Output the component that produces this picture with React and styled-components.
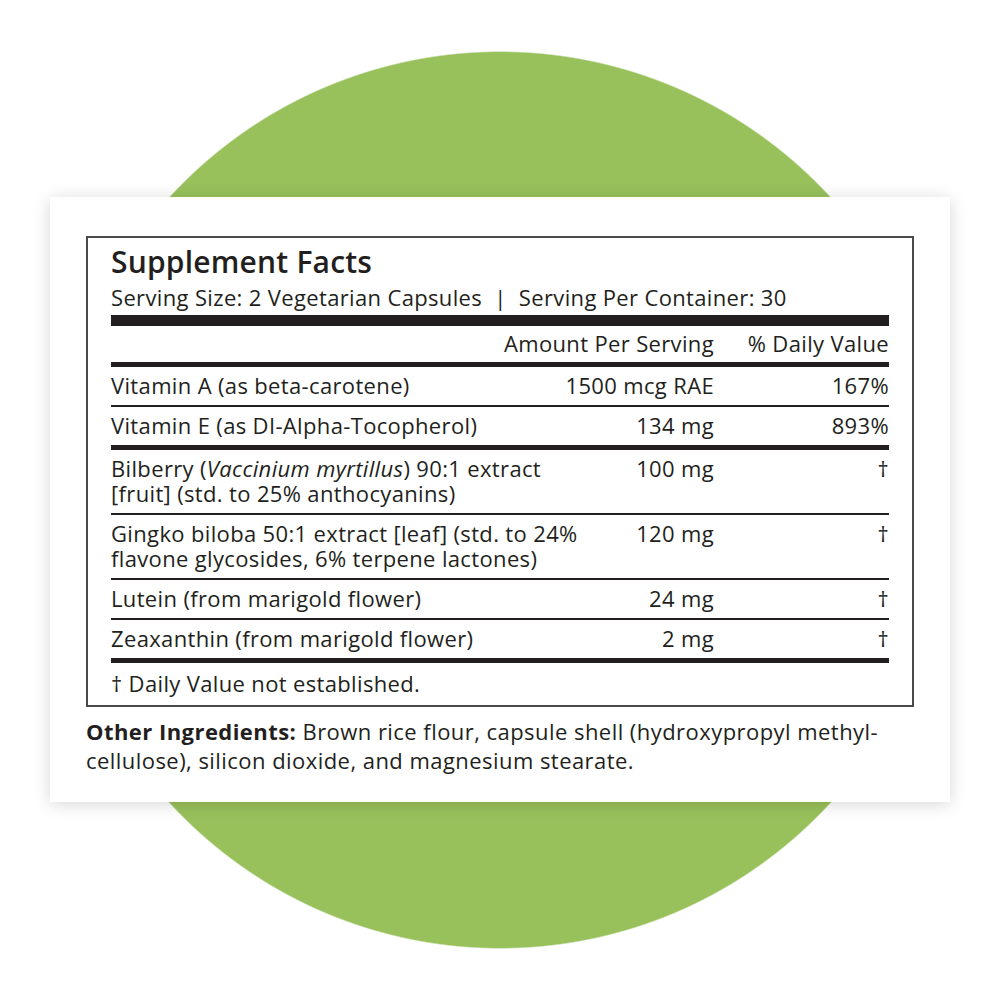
import React from "react";
import styled, { createGlobalStyle } from "styled-components";

const Global = createGlobalStyle`
  html, body { margin: 0; padding: 0; background: #ffffff; }
  body {
    font-family: "Open Sans", "Noto Sans", sans-serif;
    color: #231f20;
    -webkit-font-smoothing: antialiased;
  }
`;

const Stage = styled.div`
  width: 1000px;
  height: 1000px;
  box-sizing: border-box;
  padding: 197px 50px 0;
  background: radial-gradient(circle 449px at 500px 500px, #98c15c 447.5px, rgba(255, 255, 255, 0) 449px);
`;

const Card = styled.div`
  width: 900px;
  height: 605px;
  box-sizing: border-box;
  background: #ffffff;
  padding: 39px 36px 0;
  box-shadow: 0 2px 16px rgba(0, 0, 0, 0.16);
`;

const FactsBox = styled.div`
  border: 2px solid #4a4a4a;
  padding: 0 23px;
`;

const Title = styled.h1`
  margin: 0;
  padding-top: 6px;
  font-size: 30px;
  line-height: 36px;
  font-weight: 600;
  letter-spacing: 0.2px;
`;

const Serving = styled.div`
  margin-top: 5px;
  font-size: 22px;
  line-height: 25px;
  letter-spacing: 0.35px;
`;

const Bar = styled.div`
  height: ${(p) => p.$h}px;
  margin-top: ${(p) => p.$mt || 0}px;
  background: #231f20;
`;

const Row = styled.div`
  display: grid;
  grid-template-columns: minmax(0, 1fr) auto 175px;
  font-size: 22px;
  line-height: 25px;
  letter-spacing: 0.35px;
  padding: ${(p) => (p.$header ? "5px 0 6px" : "6px 0 7px")};
  border-bottom: ${(p) => (p.$rule === "thick" ? 5 : 2)}px solid #231f20;
`;

const Name = styled.div`
  white-space: nowrap;
`;

const Amount = styled.div`
  text-align: right;
  white-space: nowrap;
`;

const Daily = styled.div`
  text-align: right;
  white-space: nowrap;
`;

const Footnote = styled.div`
  font-size: 22px;
  line-height: 25px;
  letter-spacing: 0.35px;
  padding: 8px 0 9px;
`;

const Other = styled.p`
  margin: 10px 0 0;
  font-size: 22px;
  line-height: 29px;
  letter-spacing: 0.45px;
`;

const Label = styled.strong`
  font-weight: 700;
`;

const rows = [
  { name: "Vitamin A (as beta-carotene)", amt: "1500 mcg RAE", dv: "167%", rule: "thin" },
  { name: "Vitamin E (as DI-Alpha-Tocopherol)", amt: "134 mg", dv: "893%", rule: "thick" },
  {
    name: (
      <>
        Bilberry (<i>Vaccinium myrtillus</i>) 90:1 extract
        <br />
        [fruit] (std. to 25% anthocyanins)
      </>
    ),
    amt: "100 mg",
    dv: "†",
    rule: "thin",
  },
  {
    name: (
      <>
        Gingko biloba 50:1 extract [leaf] (std. to 24%
        <br />
        flavone glycosides, 6% terpene lactones)
      </>
    ),
    amt: "120 mg",
    dv: "†",
    rule: "thin",
  },
  { name: "Lutein (from marigold flower)", amt: "24 mg", dv: "†", rule: "thin" },
  { name: "Zeaxanthin (from marigold flower)", amt: "2 mg", dv: "†", rule: "thick" },
];

export default function App() {
  return (
    <>
      <Global />
      <Stage>
        <Card>
          <FactsBox>
            <Title>Supplement Facts</Title>
            <Serving>Serving Size: 2 Vegetarian Capsules &nbsp;|&nbsp; Serving Per Container: 30</Serving>
            <Bar $h={11} $mt={5} />
            <Row $header $rule="thick">
              <Name />
              <Amount>Amount Per Serving</Amount>
              <Daily>% Daily Value</Daily>
            </Row>
            {rows.map((r, i) => (
              <Row key={i} $rule={r.rule}>
                <Name>{r.name}</Name>
                <Amount>{r.amt}</Amount>
                <Daily>{r.dv}</Daily>
              </Row>
            ))}
            <Footnote>† Daily Value not established.</Footnote>
          </FactsBox>
          <Other>
            <Label>Other Ingredients:</Label> Brown rice flour, capsule shell (hydroxypropyl methyl-
            <br />
            cellulose), silicon dioxide, and magnesium stearate.
          </Other>
        </Card>
      </Stage>
    </>
  );
}
